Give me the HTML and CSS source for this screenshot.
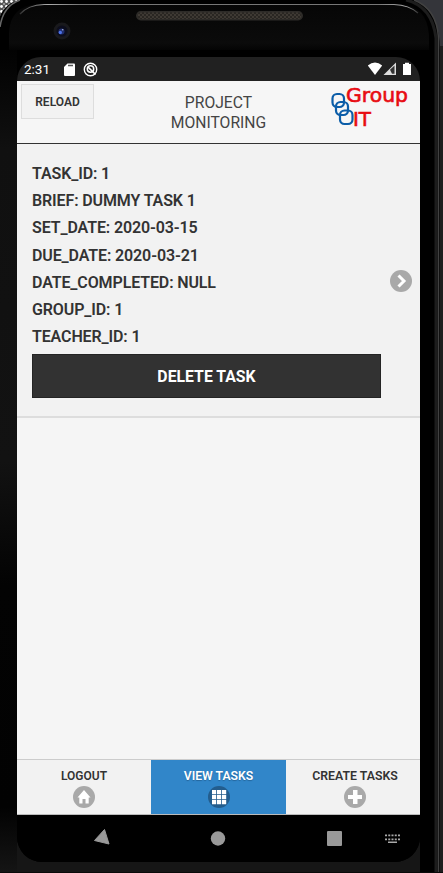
FILE: index.html
```html
<!DOCTYPE html>
<html lang="en">
<head>
<meta charset="utf-8">
<meta name="viewport" content="width=device-width">
<title>Project Monitoring</title>
<link rel="stylesheet" href="styles.css">
</head>
<body>
<div class="device">
  <svg class="shell" viewBox="0 0 443 873" aria-hidden="true">
    <defs>
      <pattern id="mesh" width="5" height="5" patternUnits="userSpaceOnUse"><rect width="5" height="5" fill="#555"/><circle cx="1.5" cy="1.5" r="1.4" fill="#fff"/><circle cx="4" cy="4" r="1" fill="#aaa"/></pattern>
      <pattern id="grille" width="4" height="4" patternUnits="userSpaceOnUse"><rect width="4" height="4" fill="#292622"/><circle cx="1" cy="1" r=".9" fill="#48423b"/><circle cx="3" cy="3" r=".9" fill="#48423b"/></pattern>
      <linearGradient id="side" x1="0" y1="0" x2="0" y2="1"><stop offset="0" stop-color="#020202"/><stop offset=".12" stop-color="#101010"/><stop offset=".5" stop-color="#121212"/><stop offset=".65" stop-color="#030303"/><stop offset=".92" stop-color="#020202"/><stop offset="1" stop-color="#151515"/></linearGradient>
      <linearGradient id="brow" x1="0" y1="0" x2="0" y2="1"><stop offset="0" stop-color="#060606"/><stop offset=".85" stop-color="#0b0b0b"/><stop offset="1" stop-color="#040404"/></linearGradient>
      <linearGradient id="rim" x1="0" y1="0" x2="1" y2="0"><stop offset="0" stop-color="#333"/><stop offset=".07" stop-color="#aaa"/><stop offset=".15" stop-color="#777"/><stop offset=".9" stop-color="#777"/><stop offset=".97" stop-color="#aaa"/><stop offset="1" stop-color="#333"/></linearGradient>
    </defs>
    <rect width="443" height="873" fill="#000"/>
    <path d="M0 0H19Q5 4 0 16Z" fill="url(#mesh)"/>
    <path d="M415 0H443V50H440Q440 12 415 0Z" fill="#34353a"/>
    <path d="M0 27Q3 6 20 0" fill="none" stroke="#666" stroke-width="1.5"/>
    <rect y="50" width="17" height="823" fill="url(#side)"/>
    <path d="M9 50V33Q10 5 40 4H400Q427 6 429 35V50Z" fill="url(#brow)"/>
    <path d="M20 14Q28 5 44 4.500H394Q409 5 418 13" fill="none" stroke="url(#rim)" stroke-width="1.200"/>
    <rect x="17" y="835" width="403" height="38" fill="#161616"/>
    <path d="M406 0Q432 6 436 38V873" fill="none" stroke="#1d1d1d" stroke-width="3"/>
    <path d="M414 0Q437 9 438.500 38V873" fill="none" stroke="#414141" stroke-width="1.500"/>
    <path d="M441.500 46V873" stroke="#1e1e1e" stroke-width="3"/>
    <path d="M0 872.500H443" stroke="#090909"/>
    <rect x="136" y="11" width="167" height="9.500" rx="4.700" fill="#2d2b28"/>
    <rect x="138" y="12.500" width="163" height="6.500" rx="3" fill="url(#grille)"/>
    <circle cx="62" cy="31" r="8.500" fill="#19191c"/><circle cx="62" cy="31" r="5.500" fill="#0c0d1c"/><circle cx="61.500" cy="31.500" r="3" fill="#202e70"/><circle cx="60.300" cy="32.500" r="1.700" fill="#4d72e6"/><circle cx="62.700" cy="29.700" r=".8" fill="#a6afd0"/>
  </svg>
  <main class="screen">
    <div class="status">
      <span class="clock">2:31</span>
      <svg class="sd" width="11" height="13" viewBox="0 0 11 13"><path d="M3.500 .500H10q1 0 1 1V12q0 1-1 1H1q-1 0-1-1V4Z" fill="#fff"/><path d="M4 2.500h5" stroke="#555" stroke-width="1.500"/></svg>
      <svg class="sync" width="15" height="15" viewBox="0 0 15 15" fill="none" stroke="#fff"><circle cx="7.500" cy="7.500" r="6.200" stroke-width="1.400"/><circle cx="7.500" cy="7" r="3.200" stroke-width="1.500"/><path d="M5 5l7.500 7.500" stroke-width="1.700"/></svg>
      <svg class="signals" width="45" height="14" viewBox="0 0 45 14"><path d="M.800 3.500Q8-2.500 15.200 3.500L8 13Z" fill="#fff"/><path d="M16.500 13L29 .500V13Z" fill="#ddd"/><path d="M23 7.700L27.500 3.500V11.800H25Z" fill="#333"/><path d="M36 2h2V.700h4V2h2V13h-8Z" fill="#fff"/></svg>
    </div>
    <header class="header">
      <button class="reload">RELOAD</button>
      <h1 class="title">PROJECT<br>MONITORING</h1>
      <svg class="logo" width="86" height="50" viewBox="0 0 86 50">
        <g fill="none" stroke="#0b5da8" stroke-width="2.200"><rect x="3.500" y="9" width="11.500" height="13" rx="4.500"/><rect x="7" y="17" width="12" height="13" rx="4.500"/><rect x="11" y="25.500" width="12.500" height="13.500" rx="4.500"/></g>
        <text class="logo-text" x="17" y="17" textLength="62" lengthAdjust="spacingAndGlyphs">Group</text>
        <text class="logo-text" x="24" y="41" textLength="18" lengthAdjust="spacingAndGlyphs">IT</text>
      </svg>
    </header>
    <div class="content">
      <section class="task">
        <div class="details">
          <p>TASK_ID: 1</p>
          <p>BRIEF: DUMMY TASK 1</p>
          <p>SET_DATE: 2020-03-15</p>
          <p>DUE_DATE: 2020-03-21</p>
          <p>DATE_COMPLETED: NULL</p>
          <p>GROUP_ID: 1</p>
          <p>TEACHER_ID: 1</p>
          <button class="delete">DELETE TASK</button>
        </div>
        <svg class="arrow" width="22" height="22" viewBox="0 0 22 22"><circle cx="11" cy="11" r="11" fill="#a9a9a9"/><path d="M8.500 5.500L14 11l-5.500 5.500" fill="none" stroke="#fff" stroke-width="3"/></svg>
      </section>
    </div>
    <nav class="tabs">
      <a class="tab"><span>LOGOUT</span><svg width="22" height="22" viewBox="0 0 22 22"><circle cx="11" cy="11" r="11" fill="#a9a9a9"/><path d="M11 4L4.500 11.500H6.300V17.500H9.500V13h3v4.500h3.200v-6h1.800Z" fill="#fff"/></svg></a>
      <a class="tab active"><span>VIEW TASKS</span><svg width="22" height="22" viewBox="0 0 22 22"><circle cx="11" cy="11" r="11" fill="#235d8d"/><path d="M4 4h4.200v4.200H4zM9 4h4.200v4.200H9zM14 4h4.200v4.200H14zM4 9h4.200v4.200H4zM9 9h4.200v4.200H9zM14 9h4.200v4.200H14zM4 14h4.200v4.200H4zM9 14h4.200v4.200H9zM14 14h4.200v4.200H14z" fill="#fff"/></svg></a>
      <a class="tab create"><span>CREATE TASKS</span><svg width="22" height="22" viewBox="0 0 22 22"><circle cx="11" cy="11" r="11" fill="#a9a9a9"/><path d="M9 4h4.500v5H18v4h-4.500v5H9v-5H4V9h5Z" fill="#fff"/></svg></a>
    </nav>
    <svg class="android" width="403" height="47" viewBox="0 0 403 47" fill="#999"><path d="M87.500 14.500L92 29L77.500 25.500Z" stroke="#999" stroke-linejoin="round"/><circle cx="201" cy="23.500" r="7.200"/><rect x="310" y="16" width="15" height="15" rx="1"/><path d="M368 20.300h15M368 24.300h15" stroke="#aaa" stroke-width="1.700" stroke-dasharray="2 1.250"/><path d="M371 27.300h9" stroke="#aaa" stroke-width="1.500"/></svg>
  </main>
</div>
</body>
</html>
```
FILE: styles.css
```css
* { box-sizing: border-box; }
body { margin: 0; background: #000; font-family: Roboto, sans-serif; color: #333; }
.device { position: relative; width: 443px; height: 873px; padding: 57px 23px 11px 17px; overflow: hidden; }
.shell { position: absolute; top: 0; left: 0; width: 443px; height: 873px; }
.screen { position: relative; display: flex; flex-direction: column; height: 805px; background: #000; border-radius: 24px 24px 25px 25px; overflow: hidden; }
.status { display: flex; flex: 0 0 24px; align-items: center; padding: 0 8px 0 7px; background: #212121; color: #fff; }
.clock { width: 26px; font-size: 13.500px; line-height: 24px; white-space: nowrap; }
.sd { margin-left: 14px; }
.sync { margin-left: 8px; }
.signals { margin-left: auto; }
.header { display: grid; grid-template-columns: 93px 1fr 93px; flex: 0 0 63px; background: #f6f6f6; border-bottom: 1px solid #333; }
.reload { width: 73px; height: 35px; margin: 3px 0 0 4px; padding: 0; border: 1px solid #ddd; background: #f2f2f2; color: #333; font: 600 12px Roboto, sans-serif; }
.title { margin: 12px 0 0; text-align: center; font-size: 15.700px; font-weight: 400; line-height: 20px; color: #444; }
.logo { margin: 4px 0 0 2px; }
.logo-text { fill: #e80b12; stroke: #e80b12; stroke-width: .6px; font: 400 19.500px "DejaVu Sans", sans-serif; }
.content { flex: 1; background: #f5f5f5; }
.task { display: flex; height: 274px; align-items: center; background: #f2f2f2; border-bottom: 2px solid #ddd; }
.details { width: 349px; height: 272px; margin-left: 15px; padding-top: 16px; }
.details p { height: 27.200px; margin: 0; font-size: 16px; font-weight: 600; line-height: 27.200px; letter-spacing: -.12px; white-space: nowrap; }
.delete { display: block; width: 349px; height: 44px; margin-top: 4px; padding: 0; border: 1px solid #242424; background: #323232; color: #fff; font: 700 15.800px Roboto, sans-serif; }
.arrow { margin: 2px 0 0 9px; }
.tabs { display: grid; grid-template-columns: 134px 135px 134px; flex: 0 0 56px; border-top: 1px solid #ccc; border-bottom: 1px solid #bbb; }
.tab { display: flex; flex-direction: column; align-items: center; padding-top: 7px; background: #f2f2f2; font-size: 12px; font-weight: 600; line-height: 18px; }
.tab svg { flex: none; margin-top: 1px; }
.tab.create { padding-left: 4px; font-size: 12.300px; }
.tab.active { background: #3186c9; color: #fff; font-size: 12.200px; text-shadow: 0 1px 1px #24659b; }
.android { flex: none; background: #000; }
```
